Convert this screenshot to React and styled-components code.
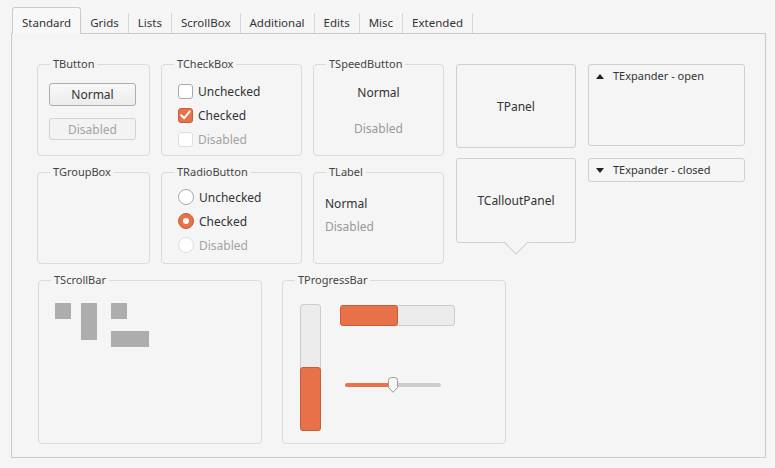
import React from "react";
import styled, { createGlobalStyle, css } from "styled-components";

const GlobalStyle = createGlobalStyle`
  html, body { margin: 0; padding: 0; background: #f5f5f5; }
  body { font-family: "Noto Sans", "Open Sans", sans-serif; color: #333; }
  * { box-sizing: border-box; }
`;

const ORANGE = "#e8714a";
const ORANGE_DARK = "#c85c38";

const Window = styled.div`
  width: 775px;
  height: 468px;
  padding: 7px 9px 0 11px;
`;

const TabBar = styled.div`
  display: flex;
  align-items: flex-end;
  height: 26px;
  padding-left: 1px;
`;

const Tab = styled.div`
  font-size: 11.5px;
  color: #333;
  padding: 0 9px;
  display: flex;
  align-items: center;
  position: relative;
  ${(p) =>
    p.$active
      ? css`
          height: 27px;
          margin-bottom: -1px;
          padding-top: 2px;
          background: #f8f8f8;
          border: 1px solid #c9c9c9;
          border-bottom: none;
          border-radius: 3px 3px 0 0;
          z-index: 1;
        `
      : css`
          height: 20px;
          padding-bottom: 1px;
          border-right: 1px solid #d6d6d6;
        `}
`;

const Content = styled.div`
  width: 755px;
  height: 425px;
  border: 1px solid #cacaca;
  padding: 30px 0 0 25px;
`;

const TopSection = styled.div`
  display: flex;
  align-items: flex-start;
`;

const Grid = styled.div`
  display: grid;
  grid-template-columns: 113px 141px 131px;
  grid-auto-rows: 92px;
  column-gap: 11px;
  row-gap: 16px;
`;

const Group = styled.div`
  position: relative;
  border: 1px solid #dadada;
  border-radius: 4px;
  width: ${(p) => p.$w || "auto"};
  height: ${(p) => p.$h || "auto"};
  padding: ${(p) => p.$pad || "0"};
`;

const GroupTitle = styled.span`
  position: absolute;
  top: -8px;
  left: 12px;
  padding: 0 3px;
  background: #f5f5f5;
  font-size: 11px;
  line-height: 14px;
  color: #444;
`;

const Stack = styled.div`
  display: flex;
  flex-direction: column;
  align-items: ${(p) => p.$align || "flex-start"};
  gap: ${(p) => p.$gap || 0}px;
`;

const Button = styled.div`
  width: 87px;
  height: ${(p) => (p.$disabled ? 22 : 23)}px;
  border: 1px solid ${(p) => (p.$disabled ? "#d2d2d2" : "#adadad")};
  border-radius: 3px;
  background: ${(p) =>
    p.$disabled ? "#f3f3f3" : "linear-gradient(#f8f8f8, #ececec)"};
  color: ${(p) => (p.$disabled ? "#a3a3a3" : "#333")};
  font-size: 12px;
  display: flex;
  align-items: center;
  justify-content: center;
`;

const Item = styled.div`
  display: flex;
  align-items: center;
  gap: 5px;
  height: 16px;
  font-size: 12px;
  color: ${(p) => (p.$disabled ? "#a3a3a3" : "#333")};
`;

const Box = styled.span`
  width: 15px;
  height: 15px;
  border-radius: 3px;
  display: flex;
  align-items: center;
  justify-content: center;
  background: ${(p) => (p.$checked ? ORANGE : "#fff")};
  border: 1px solid
    ${(p) => (p.$checked ? ORANGE_DARK : p.$disabled ? "#dedede" : "#a9a9a9")};
`;

const Radio = styled.span`
  width: 16px;
  height: 16px;
  border-radius: 50%;
  display: flex;
  align-items: center;
  justify-content: center;
  background: ${(p) => (p.$checked ? ORANGE : "#fff")};
  border: 1px solid
    ${(p) => (p.$checked ? ORANGE_DARK : p.$disabled ? "#dedede" : "#a9a9a9")};
`;

const Dot = styled.span`
  width: 6px;
  height: 6px;
  border-radius: 50%;
  background: #fff;
`;

const SpeedText = styled.div`
  font-size: 12px;
  height: 22px;
  display: flex;
  align-items: center;
  color: ${(p) => (p.$disabled ? "#999" : "#333")};
`;

const LabelText = styled.div`
  font-size: 12px;
  line-height: 16px;
  color: ${(p) => (p.$disabled ? "#999" : "#333")};
`;

const Column = styled.div`
  display: flex;
  flex-direction: column;
  width: ${(p) => p.$w}px;
  margin-left: ${(p) => p.$ml}px;
  gap: ${(p) => p.$gap}px;
`;

const Panel = styled.div`
  position: relative;
  height: ${(p) => p.$h}px;
  border: 1px solid #cfcfcf;
  border-radius: 3px;
  display: flex;
  align-items: center;
  justify-content: center;
  font-size: 12px;
  color: #333;
  background: #f5f5f5;
`;

const Callout = styled(Panel)`
  &::after {
    content: "";
    position: absolute;
    left: 50%;
    bottom: -9px;
    width: 17px;
    height: 17px;
    margin-left: -9px;
    background: #f5f5f5;
    border-right: 1px solid #cfcfcf;
    border-bottom: 1px solid #cfcfcf;
    transform: rotate(45deg);
  }
`;

const Expander = styled.div`
  height: ${(p) => p.$h}px;
  border: 1px solid #cfcfcf;
  border-radius: 3px;
  padding: ${(p) => p.$pt}px 0 0 7px;
`;

const ExpanderHead = styled.div`
  display: flex;
  align-items: center;
  gap: 9px;
  font-size: 11px;
  line-height: 14px;
  color: #333;
`;

const Arrow = styled.span`
  width: 0;
  height: 0;
  border-left: 4px solid transparent;
  border-right: 4px solid transparent;
  ${(p) =>
    p.$up
      ? css`border-bottom: 5px solid #222;`
      : css`border-top: 5px solid #222;`}
`;

const BottomSection = styled.div`
  display: flex;
  gap: 20px;
  margin-top: 16px;
  padding-left: 1px;
`;

const ScrollArea = styled.div`
  display: flex;
  align-items: flex-start;
  padding: 22px 0 0 16px;
`;

const Block = styled.span`
  display: block;
  background: #adadad;
  width: ${(p) => p.$w}px;
  height: ${(p) => p.$h}px;
  margin-left: ${(p) => p.$ml || 0}px;
`;

const BlockStack = styled.div`
  display: flex;
  flex-direction: column;
  gap: 12px;
  margin-left: 14px;
`;

const ProgressArea = styled.div`
  display: flex;
  align-items: flex-start;
  padding: 24px 0 0 18px;
`;

const VBar = styled.div`
  width: 21px;
  height: 127px;
  border: 1px solid #cdcdcd;
  border-radius: 3px;
  background: #ebebeb;
  display: flex;
  flex-direction: column;
  justify-content: flex-end;
  margin: -1px;
`;

const HBar = styled.div`
  width: 115px;
  height: 21px;
  border: 1px solid #cdcdcd;
  border-radius: 3px;
  background: #ebebeb;
  display: flex;
`;

const Fill = styled.div`
  background: ${ORANGE};
  border: 1px solid ${ORANGE_DARK};
  border-radius: 3px;
  margin: -1px;
`;

const RightCol = styled.div`
  display: flex;
  flex-direction: column;
  margin-left: 20px;
`;

const Slider = styled.div`
  position: relative;
  width: 96px;
  height: 16px;
  margin: 51px 0 0 5px;
  display: flex;
  align-items: center;
`;

const Track = styled.div`
  height: 4px;
  width: 100%;
  border-radius: 2px;
  background: linear-gradient(
    to right,
    ${ORANGE} 0,
    ${ORANGE} 48%,
    #cdcdcd 48%,
    #cdcdcd 100%
  );
`;

const Thumb = styled.svg`
  position: absolute;
  top: 0;
  left: 42px;
`;

function Check() {
  return (
    <svg width="11" height="10" viewBox="0 0 11 10">
      <path
        d="M1.2 5.2 L4.2 8.2 L9.8 1.4"
        fill="none"
        stroke="#fff"
        strokeWidth="2"
        strokeLinecap="round"
        strokeLinejoin="round"
      />
    </svg>
  );
}

const tabs = ["Standard", "Grids", "Lists", "ScrollBox", "Additional", "Edits", "Misc", "Extended"];

export default function App() {
  return (
    <>
      <GlobalStyle />
      <Window>
        <TabBar>
          {tabs.map((t, i) => (
            <Tab key={t} $active={i === 0}>
              {t}
            </Tab>
          ))}
        </TabBar>
        <Content>
          <TopSection>
            <Grid>
              <Group $pad="18px 0 0 11px">
                <GroupTitle>TButton</GroupTitle>
                <Stack $gap={12}>
                  <Button>Normal</Button>
                  <Button $disabled>Disabled</Button>
                </Stack>
              </Group>
              <Group $pad="18px 0 0 16px">
                <GroupTitle>TCheckBox</GroupTitle>
                <Stack $gap={8}>
                  <Item>
                    <Box />
                    Unchecked
                  </Item>
                  <Item>
                    <Box $checked>
                      <Check />
                    </Box>
                    Checked
                  </Item>
                  <Item $disabled>
                    <Box $disabled />
                    Disabled
                  </Item>
                </Stack>
              </Group>
              <Group $pad="16px 0 0 0">
                <GroupTitle>TSpeedButton</GroupTitle>
                <Stack $align="center" $gap={14}>
                  <SpeedText>Normal</SpeedText>
                  <SpeedText $disabled>Disabled</SpeedText>
                </Stack>
              </Group>
              <Group>
                <GroupTitle>TGroupBox</GroupTitle>
              </Group>
              <Group $pad="16px 0 0 16px">
                <GroupTitle>TRadioButton</GroupTitle>
                <Stack $gap={8}>
                  <Item>
                    <Radio />
                    Unchecked
                  </Item>
                  <Item>
                    <Radio $checked>
                      <Dot />
                    </Radio>
                    Checked
                  </Item>
                  <Item $disabled>
                    <Radio $disabled />
                    Disabled
                  </Item>
                </Stack>
              </Group>
              <Group $pad="23px 0 0 11px">
                <GroupTitle>TLabel</GroupTitle>
                <Stack $gap={7}>
                  <LabelText>Normal</LabelText>
                  <LabelText $disabled>Disabled</LabelText>
                </Stack>
              </Group>
            </Grid>
            <Column $w={120} $ml={12} $gap={10}>
              <Panel $h={84}>TPanel</Panel>
              <Callout $h={85}>TCalloutPanel</Callout>
            </Column>
            <Column $w={157} $ml={12} $gap={12}>
              <Expander $h={82} $pt={4}>
                <ExpanderHead>
                  <Arrow $up />
                  TExpander - open
                </ExpanderHead>
              </Expander>
              <Expander $h={24} $pt={4}>
                <ExpanderHead>
                  <Arrow />
                  TExpander - closed
                </ExpanderHead>
              </Expander>
            </Column>
          </TopSection>
          <BottomSection>
            <Group $w="224px" $h="164px">
              <GroupTitle>TScrollBar</GroupTitle>
              <ScrollArea>
                <Block $w={16} $h={16} />
                <Block $w={16} $h={37} $ml={10} />
                <BlockStack>
                  <Block $w={16} $h={16} />
                  <Block $w={38} $h={16} />
                </BlockStack>
              </ScrollArea>
            </Group>
            <Group $w="224px" $h="164px">
              <GroupTitle>TProgressBar</GroupTitle>
              <ProgressArea>
                <VBar>
                  <Fill style={{ height: "64px" }} />
                </VBar>
                <RightCol>
                  <HBar>
                    <Fill style={{ width: "58px" }} />
                  </HBar>
                  <Slider>
                    <Track />
                    <Thumb width="12" height="16" viewBox="0 0 12 16">
                      <path
                        d="M1.5 3.5 Q1.5 0.5 4.5 0.5 H7.5 Q10.5 0.5 10.5 3.5 V10.5 L6 15.3 L1.5 10.5 Z"
                        fill="#f7f7f7"
                        stroke="#9a9a9a"
                        strokeWidth="1"
                      />
                    </Thumb>
                  </Slider>
                </RightCol>
              </ProgressArea>
            </Group>
          </BottomSection>
        </Content>
      </Window>
    </>
  );
}
